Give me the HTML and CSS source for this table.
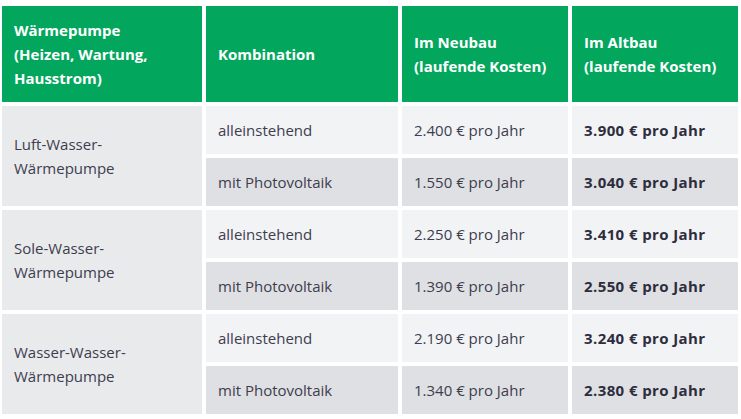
FILE: index.html
```html
<!DOCTYPE html>
<html lang="de">
<head>
<meta charset="utf-8">
<link rel="stylesheet" href="styles.css">
</head>
<body>
<table class="cost-table">
  <thead>
    <tr>
      <th class="c1">Wärmepumpe<br>(Heizen, Wartung,<br>Hausstrom)</th>
      <th class="c2">Kombination</th>
      <th class="c3">Im Neubau<br>(laufende Kosten)</th>
      <th class="c4">Im Altbau<br>(laufende Kosten)</th>
    </tr>
  </thead>
  <tbody>
    <tr class="light">
      <td class="type" rowspan="2">Luft-Wasser-<br>Wärmepumpe</td>
      <td>alleinstehend</td>
      <td>2.400 € pro Jahr</td>
      <td class="strong">3.900 € pro Jahr</td>
    </tr>
    <tr class="dark">
      <td>mit Photovoltaik</td>
      <td>1.550 € pro Jahr</td>
      <td class="strong">3.040 € pro Jahr</td>
    </tr>
    <tr class="light">
      <td class="type" rowspan="2">Sole-Wasser-<br>Wärmepumpe</td>
      <td>alleinstehend</td>
      <td>2.250 € pro Jahr</td>
      <td class="strong">3.410 € pro Jahr</td>
    </tr>
    <tr class="dark">
      <td>mit Photovoltaik</td>
      <td>1.390 € pro Jahr</td>
      <td class="strong">2.550 € pro Jahr</td>
    </tr>
    <tr class="light">
      <td class="type" rowspan="2">Wasser-Wasser-<br>Wärmepumpe</td>
      <td>alleinstehend</td>
      <td>2.190 € pro Jahr</td>
      <td class="strong">3.240 € pro Jahr</td>
    </tr>
    <tr class="dark">
      <td>mit Photovoltaik</td>
      <td>1.340 € pro Jahr</td>
      <td class="strong">2.380 € pro Jahr</td>
    </tr>
  </tbody>
</table>
</body>
</html>
```
FILE: styles.css
```css
html, body {
  margin: 0;
  padding: 0;
  background: #ffffff;
}
body {
  font-family: "Open Sans", "Noto Sans", sans-serif;
  color: #3d3d4e;
}
.cost-table {
  border-collapse: separate;
  border-spacing: 4px;
  margin: 2px 0 0 -2px;
  table-layout: fixed;
  width: 744px;
}
.cost-table th,
.cost-table td {
  padding: 0 12px;
  text-align: left;
  vertical-align: middle;
}
.cost-table th {
  background: #02a65c;
  color: #ffffff;
  font-weight: 700;
  font-size: 15px;
  line-height: 24px;
  height: 96px;
}
.c1 { width: 176px; }
.c2 { width: 168px; }
.c3 { width: 142px; }
.c4 { width: auto; }
.cost-table td {
  font-size: 15px;
  line-height: 24px;
  height: 48px;
}
.light td { background: #f2f3f5; }
.dark td { background: #dfe0e3; }
.cost-table td.type { background: #e9eaec; }
.cost-table td.strong {
  font-weight: 700;
  color: #2d2d3d;
  letter-spacing: 0.4px;
}
```
